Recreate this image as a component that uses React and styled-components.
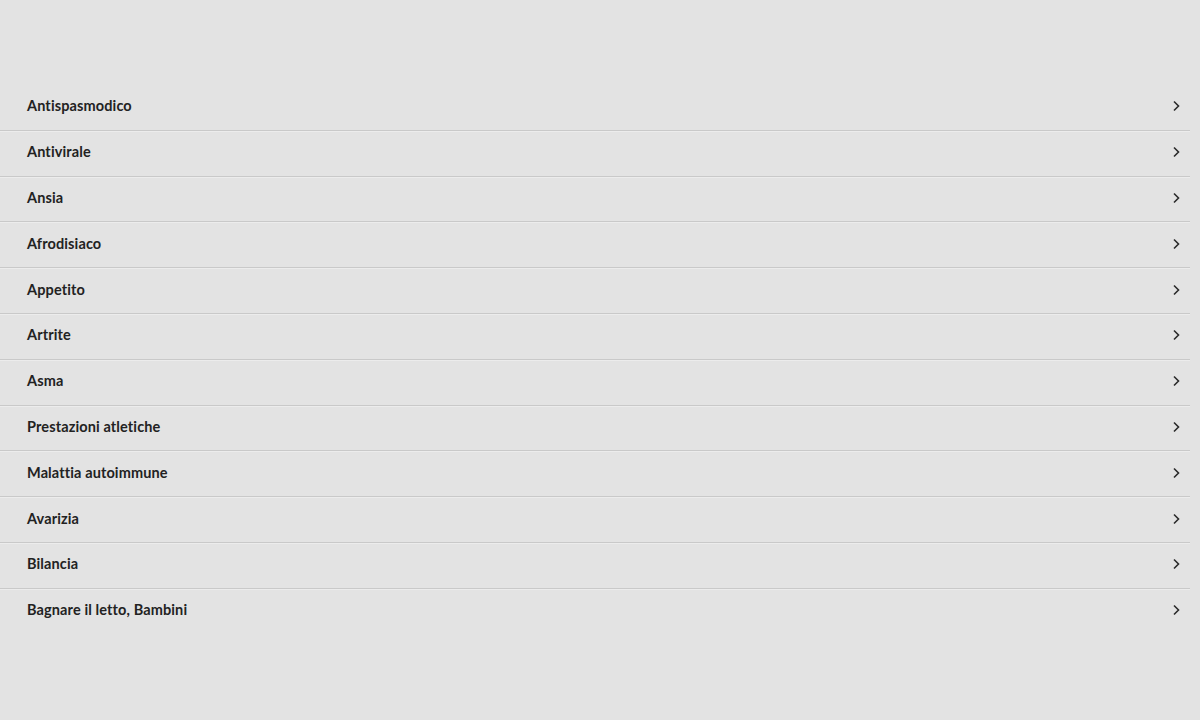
import React from 'react';
import styled, { createGlobalStyle } from 'styled-components';

const items = [
  'Antispasmodico',
  'Antivirale',
  'Ansia',
  'Afrodisiaco',
  'Appetito',
  'Artrite',
  'Asma',
  'Prestazioni atletiche',
  'Malattia autoimmune',
  'Avarizia',
  'Bilancia',
  'Bagnare il letto, Bambini',
];

const GlobalStyle = createGlobalStyle`
  html, body {
    margin: 0;
    background: #e3e3e3;
  }
  body {
    font-family: Lato, "Liberation Sans", sans-serif;
  }
`;

const Page = styled.div`
  min-height: 720px;
  padding-top: 85px;
  box-sizing: border-box;
`;

const List = styled.ul`
  list-style: none;
  margin: 0;
  padding: 0;
  width: 1190px;
`;

const Row = styled.li`
  display: flex;
  align-items: center;
  justify-content: space-between;
  height: 45.8px;
  box-sizing: border-box;
  padding: 0 9px 3px 27px;
  border-bottom: 1px solid ${p => (p.last ? 'transparent' : '#c9c9c9')};
  box-shadow: ${p => (p.last ? 'none' : '0 1px 0 #ececec')};
  cursor: pointer;
`;

const Label = styled.span`
  font-size: 14.5px;
  font-weight: 700;
  letter-spacing: 0.12px;
  color: #222;
`;

const Arrow = styled.svg`
  margin-top: 1px;
  flex: none;
`;

const Chevron = () => (
  <Arrow width="10" height="12" viewBox="0 0 10 12">
    <path d="M3 1.5 L7.5 6 L3 10.5" fill="none" stroke="#2b2b2b" strokeWidth="1.6" />
  </Arrow>
);

export default function App() {
  return (
    <>
      <GlobalStyle />
      <Page>
        <List>
          {items.map((item, i) => (
            <Row key={item} last={i === items.length - 1}>
              <Label>{item}</Label>
              <Chevron />
            </Row>
          ))}
        </List>
      </Page>
    </>
  );
}
